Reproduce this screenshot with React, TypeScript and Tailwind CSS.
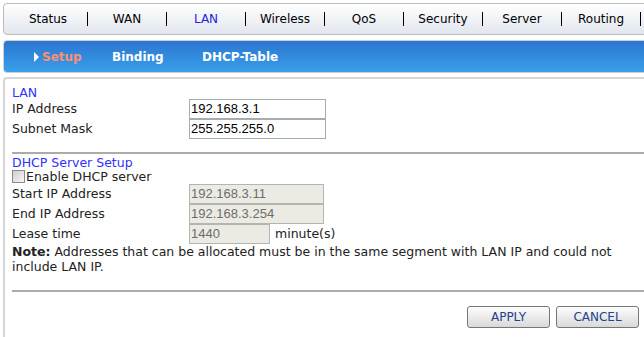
const NAV_ITEMS = ["Status", "WAN", "LAN", "Wireless", "QoS", "Security", "Server", "Routing"];

function TextBox({ value, width, disabled }: { value: string; width: string; disabled?: boolean }) {
  return (
    <div
      className={`${width} h-[20px] border flex items-center px-[1px] font-['Liberation_Sans',Arial,sans-serif] text-[13px] ${
        disabled
          ? "bg-[#ebebe4] border-[#b4b4b0] text-[#6d6d6d]"
          : "bg-white border-[#a5acb2] text-black"
      }`}
    >
      {value}
    </div>
  );
}

function Row({ label, children }: { label: string; children: React.ReactNode }) {
  return (
    <div className="h-[20px] flex items-center">
      <div className="w-[177px] text-[#222]">{label}</div>
      {children}
    </div>
  );
}

export default function App() {
  return (
    <div className="w-[644px] h-[337px] overflow-hidden bg-white pt-[3px] pl-[3px] font-['DejaVu_Sans',Verdana,sans-serif]">
      {/* Top nav */}
      <div className="w-[660px] h-[32px] rounded-[4px] border border-[#bcbcbc] bg-linear-to-b from-white to-[#e1e6ee] flex items-center pl-[5px] text-[12px] text-black">
        {NAV_ITEMS.map((item) => (
          <div key={item} className="flex items-center">
            <span className={`w-[78px] text-center ${item === "LAN" ? "text-[#2323e0]" : ""}`}>{item}</span>
            <span className="w-px h-[14px] bg-black" />
          </div>
        ))}
      </div>

      {/* Sub nav */}
      <div className="mt-[5px] w-[660px] h-[33px] rounded-[4px] border border-[#cfcfcf] bg-linear-to-b from-[#2b76cf] to-[#3a9fea] flex items-center pl-[30px] text-[12px] font-bold text-white">
        <div className="w-[78px] flex items-center">
          <span className="w-0 h-0 border-y-[5px] border-y-transparent border-l-[5px] border-l-white" />
          <span className="ml-[3px] text-[#ff8f72]">Setup</span>
        </div>
        <div className="w-[90px]">Binding</div>
        <div>DHCP-Table</div>
      </div>

      {/* Content panel */}
      <div className="mt-[4px] w-[641px] h-[260px] border-l-2 border-t-2 border-[#d6d6d6] rounded-tl-[4px] pl-[7px] pr-[5px] pt-[7px] text-[12.5px]">
        <div className="h-[13px] leading-[13px] text-[#3030ff]">LAN</div>
        <Row label="IP Address">
          <TextBox value="192.168.3.1" width="w-[137px]" />
        </Row>
        <Row label="Subnet Mask">
          <TextBox value="255.255.255.0" width="w-[137px]" />
        </Row>

        <div className="mt-[13px] -mr-[5px] h-[2px] bg-[#ababab]" />

        <div className="mt-[2px] h-[14px] leading-[14px] text-[#3030ff]">DHCP Server Setup</div>
        <div className="h-[14px] leading-[14px] flex text-[#222]">
          <span className="w-[13px] h-[13px] border border-[#8a8a8a] bg-linear-to-br from-[#cfcfcf] to-[#f6f6f6]" />
          <span className="ml-[1px]">Enable DHCP server</span>
        </div>
        <Row label="Start IP Address">
          <TextBox value="192.168.3.11" width="w-[135px]" disabled />
        </Row>
        <Row label="End IP Address">
          <TextBox value="192.168.3.254" width="w-[135px]" disabled />
        </Row>
        <Row label="Lease time">
          <TextBox value="1440" width="w-[81px]" disabled />
          <span className="ml-[5px] text-[#222]">minute(s)</span>
        </Row>
        <p className="leading-[15px] text-[#222]">
          <span className="font-bold">Note:</span> Addresses that can be allocated must be in the same segment with LAN IP and could not include LAN IP.
        </p>

        <div className="mt-[16px] -mr-[5px] h-[2px] bg-[#ababab]" />

        <div className="mt-[14px] flex justify-end gap-[6px] text-[12px] text-[#23418c]">
          <button className="w-[83px] h-[22px] rounded-[3px] border border-[#767676] bg-linear-to-b from-[#fdfdfd] to-[#d9d9d9]">
            APPLY
          </button>
          <button className="w-[83px] h-[22px] rounded-[3px] border border-[#767676] bg-linear-to-b from-[#fdfdfd] to-[#d9d9d9]">
            CANCEL
          </button>
        </div>
      </div>
    </div>
  );
}
